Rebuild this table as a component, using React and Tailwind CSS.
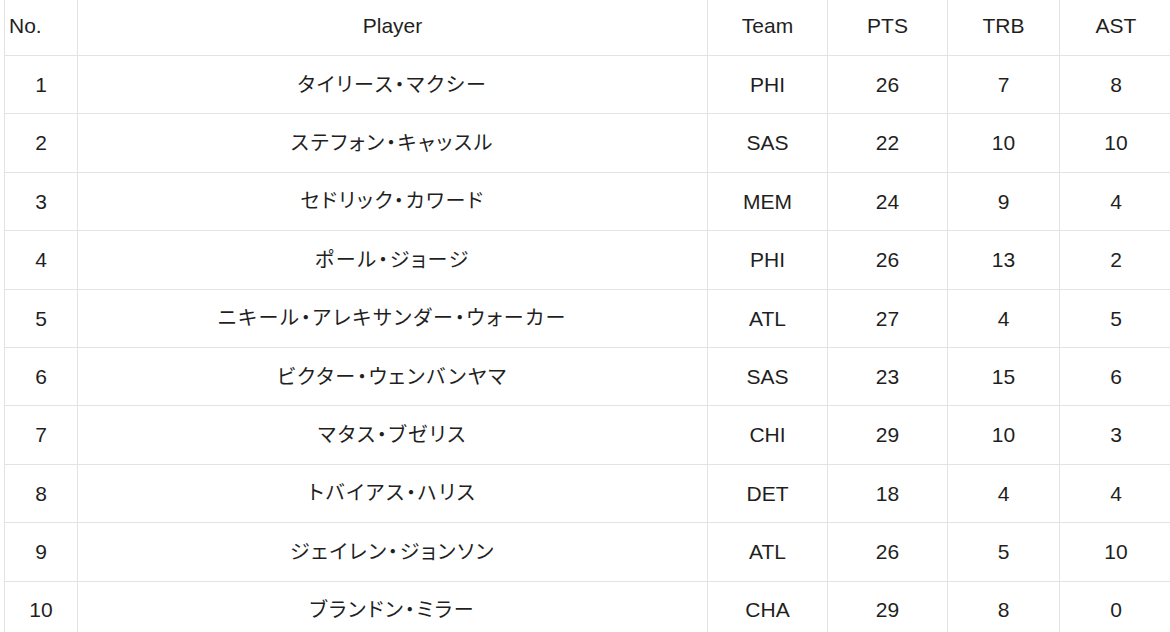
import React from "react";

const rows = [
  [1, "タイリース・マクシー", "PHI", 26, 7, 8],
  [2, "ステフォン・キャッスル", "SAS", 22, 10, 10],
  [3, "セドリック・カワード", "MEM", 24, 9, 4],
  [4, "ポール・ジョージ", "PHI", 26, 13, 2],
  [5, "ニキール・アレキサンダー・ウォーカー", "ATL", 27, 4, 5],
  [6, "ビクター・ウェンバンヤマ", "SAS", 23, 15, 6],
  [7, "マタス・ブゼリス", "CHI", 29, 10, 3],
  [8, "トバイアス・ハリス", "DET", 18, 4, 4],
  [9, "ジェイレン・ジョンソン", "ATL", 26, 5, 10],
  [10, "ブランドン・ミラー", "CHA", 29, 8, 0],
];

export default function App() {
  return (
    <div className="w-[1170px] h-[632px] overflow-hidden bg-white">
      <table
        className="ml-[4px] mt-[-4px] table-fixed border-collapse text-[#1f1f1f] text-[21px] w-[1168px]"
        style={{ fontFamily: '"Liberation Sans", Arial, "Noto Sans CJK JP", sans-serif' }}
      >
        <colgroup>
          <col className="w-[73px]" />
          <col className="w-[630px]" />
          <col className="w-[120px]" />
          <col className="w-[120px]" />
          <col className="w-[112px]" />
          <col className="w-[113px]" />
        </colgroup>
        <thead>
          <tr className="h-[59px]">
            <th className="border border-[#e3e3e3] font-normal text-left pl-[4px]">No.</th>
            <th className="border border-[#e3e3e3] font-normal">Player</th>
            <th className="border border-[#e3e3e3] font-normal">Team</th>
            <th className="border border-[#e3e3e3] font-normal">PTS</th>
            <th className="border border-[#e3e3e3] font-normal">TRB</th>
            <th className="border border-[#e3e3e3] font-normal">AST</th>
          </tr>
        </thead>
        <tbody>
          {rows.map((r) => (
            <tr key={r[0]} className="h-[58.4px]">
              <td className="border border-[#e3e3e3] text-center">{r[0]}</td>
              <td className="border border-[#e3e3e3] text-center text-[20px] tracking-[1.8px] [font-feature-settings:'palt']">{r[1]}</td>
              <td className="border border-[#e3e3e3] text-center">{r[2]}</td>
              <td className="border border-[#e3e3e3] text-center">{r[3]}</td>
              <td className="border border-[#e3e3e3] text-center">{r[4]}</td>
              <td className="border border-[#e3e3e3] text-center">{r[5]}</td>
            </tr>
          ))}
        </tbody>
      </table>
    </div>
  );
}
